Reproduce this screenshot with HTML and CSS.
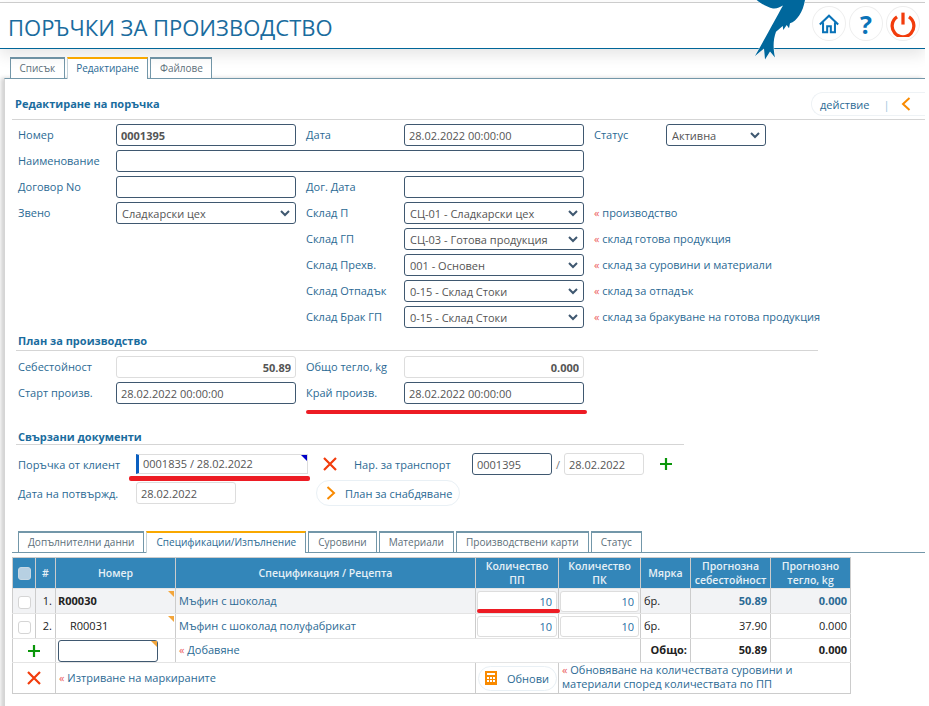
FILE: index.html
```html
<!DOCTYPE html>
<html lang="bg">
	<head>
		<meta charset="UTF-8" />
		<title>Поръчки за производство</title>
		<link rel="stylesheet" href="styles.css">
	</head>
	<body>
		<div class="page">
			<!-- Header -->
			<header class="top">
				<h1>ПОРЪЧКИ ЗА ПРОИЗВОДСТВО</h1>
				<svg class="bird" viewBox="0 0 60 60" width="60" height="60">
					<path d="M6.7 0 C10 3 17 7 23 8.5 C27 9 30 7 33 5.5 C26 18 18 33 5 56 L14 48.5 L15 59.5 L20 51.5 L25 57.5 C23 48 23 40 26 31.7 L32.7 26 L33.3 30 L36.7 25 L39 28.3 L40 23.3 C47 21 53 12 55 0 Z" />
				</svg>
				<nav class="top-icons">
					<a class="round-btn">
						<svg viewBox="0 0 24 24" width="22" height="22" fill="none" stroke="#0a73b8" stroke-width="2.2"><path d="M2 12.5 L12 3 L22 12.5" /><path d="M5.5 10 V21 H10 V14.5 H14 V21 H18.5 V10" /></svg>
					</a>
					<a class="round-btn help">?</a>
					<a class="round-btn">
						<svg viewBox="0 0 24 24" width="26" height="26" fill="none" stroke="#f23c0c" stroke-width="3"><path d="M12 1.5 V12.5" /><path d="M6.5 5.5 A10 10 0 1 0 17.5 5.5" /></svg>
					</a>
				</nav>
			</header>

			<!-- Main tabs -->
			<div class="tabs main-tabs">
				<a class="tab">Списък</a>
				<a class="tab active">Редактиране</a>
				<a class="tab">Файлове</a>
			</div>

			<div class="panel">
				<div class="panel-head">
					<h2>Редактиране на поръчка</h2>
					<div class="action-pill">
						<span>действие</span>
						<i class="pipe">|</i>
						<svg viewBox="0 0 10 14" width="10" height="14" fill="none" stroke="#f98a00" stroke-width="2"><path d="M8.5 1 L2 7 L8.5 13" /></svg>
					</div>
				</div>

				<!-- Order form -->
				<div class="form-grid">
					<label>Номер</label>
					<input class="strong" value="0001395" />
					<label>Дата</label>
					<input value="28.02.2022 00:00:00" />
					<label>Статус</label>
					<select><option>Активна</option></select>

					<label>Наименование</label>
					<input class="span3" value="" />
					<div class="span2"></div>

					<label>Договор No</label>
					<input value="" />
					<label>Дог. Дата</label>
					<input value="" />
					<div class="span2"></div>

					<label>Звено</label>
					<select><option>Сладкарски цех</option></select>
					<label>Склад П</label>
					<select><option>СЦ-01 - Сладкарски цех</option></select>
					<div class="note span2"><b>«</b> производство</div>

					<div class="span2"></div>
					<label>Склад ГП</label>
					<select><option>СЦ-03 - Готова продукция</option></select>
					<div class="note span2"><b>«</b> склад готова продукция</div>

					<div class="span2"></div>
					<label>Склад Прехв.</label>
					<select><option>001 - Основен</option></select>
					<div class="note span2"><b>«</b> склад за суровини и материали</div>

					<div class="span2"></div>
					<label>Склад Отпадък</label>
					<select><option>0-15 - Склад Стоки</option></select>
					<div class="note span2"><b>«</b> склад за отпадък</div>

					<div class="span2"></div>
					<label>Склад Брак ГП</label>
					<select><option>0-15 - Склад Стоки</option></select>
					<div class="note span2"><b>«</b> склад за бракуване на готова продукция</div>
				</div>

				<h3 class="section plan">План за производство</h3>
				<div class="form-grid plan-grid">
					<label>Себестойност</label>
					<input class="readonly strong right" value="50.89" />
					<label>Общо тегло, kg</label>
					<input class="readonly strong right" value="0.000" />
					<div class="span2"></div>

					<label>Старт произв.</label>
					<input value="28.02.2022 00:00:00" />
					<label>Край произв.</label>
					<input value="28.02.2022 00:00:00" />
					<div class="span2"></div>
				</div>

				<h3 class="section linked">Свързани документи</h3>
				<div class="link-row first">
					<label>Поръчка от клиент</label>
					<div class="link-field">0001835 / 28.02.2022</div>
					<svg class="ico-x" viewBox="0 0 14 14" width="14" height="14" fill="none" stroke="#f23c0c" stroke-width="2.2"><path d="M1 1 L13 13 M13 1 L1 13" /></svg>
					<label class="transport-label">Нар. за транспорт</label>
					<input class="transport-no" value="0001395" />
					<span class="slash">/</span>
					<input class="readonly transport-date" value="28.02.2022" />
					<svg class="ico-plus" viewBox="0 0 14 14" width="14" height="14" fill="none" stroke="#0a960a" stroke-width="2.2"><path d="M7 1 V13 M1 7 H13" /></svg>
				</div>
				<div class="link-row">
					<label>Дата на потвържд.</label>
					<input class="readonly confirm-date" value="28.02.2022" />
					<a class="pill-btn supply">
						<svg viewBox="0 0 10 14" width="10" height="14" fill="none" stroke="#f98a00" stroke-width="2"><path d="M1.5 1 L8 7 L1.5 13" /></svg>
						План за снабдяване
					</a>
				</div>

				<!-- Detail tabs -->
				<div class="tabs sub-tabs">
					<a class="tab">Допълнителни данни</a>
					<a class="tab active">Спецификации/Изпълнение</a>
					<a class="tab">Суровини</a>
					<a class="tab">Материали</a>
					<a class="tab">Производствени карти</a>
					<a class="tab">Статус</a>
				</div>

				<table class="spec">
					<colgroup>
						<col class="c-check"><col class="c-num"><col class="c-code"><col class="c-name">
						<col class="c-qty"><col class="c-qty2"><col class="c-unit"><col class="c-sum"><col class="c-sum">
					</colgroup>
					<thead>
						<tr>
							<th><input type="checkbox" class="check head-check" /></th>
							<th>#</th>
							<th>Номер</th>
							<th>Спецификация / Рецепта</th>
							<th>Количество<br>ПП</th>
							<th>Количество<br>ПК</th>
							<th>Мярка</th>
							<th>Прогнозна<br>себестойност</th>
							<th>Прогнозно<br>тегло, kg</th>
						</tr>
					</thead>
					<tbody>
						<tr class="row-main">
							<td class="center"><input type="checkbox" class="check" /></td>
							<td class="right dark">1.</td>
							<td class="code corner"><b>R00030</b></td>
							<td>Мъфин с шоколад</td>
							<td class="qty"><input value="10" /></td>
							<td class="qty"><input value="10" /></td>
							<td class="dark">бр.</td>
							<td class="right"><b>50.89</b></td>
							<td class="right"><b>0.000</b></td>
						</tr>
						<tr>
							<td class="center"><input type="checkbox" class="check" /></td>
							<td class="right dark">2.</td>
							<td class="code sub corner">R00031</td>
							<td>Мъфин с шоколад полуфабрикат</td>
							<td class="qty"><input value="10" /></td>
							<td class="qty"><input value="10" /></td>
							<td class="dark">бр.</td>
							<td class="right dark">37.90</td>
							<td class="right dark">0.000</td>
						</tr>
						<tr class="row-add">
							<td colspan="2" class="center">
								<svg viewBox="0 0 14 14" width="14" height="14" fill="none" stroke="#0a960a" stroke-width="2.2"><path d="M7 1 V13 M1 7 H13" /></svg>
							</td>
							<td class="add-code"><div class="add-input"><input value="" /></div></td>
							<td colspan="3" class="note-cell"><b>«</b> Добавяне</td>
							<td class="right dark"><b>Общо:</b></td>
							<td class="right dark"><b>50.89</b></td>
							<td class="right dark"><b>0.000</b></td>
						</tr>
					</tbody>
					<tfoot>
						<tr>
							<td colspan="2" class="center">
								<svg viewBox="0 0 14 14" width="14" height="14" fill="none" stroke="#f23c0c" stroke-width="2.2"><path d="M1 1 L13 13 M13 1 L1 13" /></svg>
							</td>
							<td colspan="2" class="note-cell"><b>«</b> Изтриване на маркираните</td>
							<td class="refresh-cell">
								<a class="pill-btn refresh">
									<svg viewBox="0 0 12 14" width="12" height="14"><path fill="#f98a00" fill-rule="evenodd" d="M0 0 H12 V14 H0 Z M2 2 V4 H10 V2 Z M2 6 V8 H4 V6 Z M5 6 V8 H7 V6 Z M8 6 V8 H10 V6 Z M2 9 V11 H4 V9 Z M5 9 V11 H7 V9 Z M8 9 V11 H10 V9 Z" /></svg>
									Обнови
								</a>
							</td>
							<td colspan="4" class="note-cell wrap"><b>«</b> Обновяване на количествата суровини и материали според количествата по ПП</td>
						</tr>
					</tfoot>
				</table>
			</div>

			<!-- Red marks drawn over the screenshot -->
			<span class="mark mark-end"></span>
			<span class="mark mark-client"></span>
			<span class="mark mark-qty"></span>
		</div>
	</body>
</html>
```

FILE: styles.css
```css
/* Base styles */
html, body {
	margin: 0;
	padding: 0;
	background: #fff;
}
body {
	font-family: "Open Sans", Arial, sans-serif;
	font-size: 11px;
	color: #2b6a94;
	overflow: hidden;
}
.page {
	position: relative;
	width: 925px;
	height: 706px;
	overflow: hidden;
}
input, select {
	font-family: inherit;
	font-size: 11px;
	color: #555;
	box-sizing: border-box;
	height: 22px;
	margin: 0;
	padding: 0 4px;
	background: #fff;
	border: 1px solid #3f5870;
	border-radius: 3px;
	outline: none;
}
select {
	appearance: none;
	padding-left: 5px;
	background-image: url("data:image/svg+xml,%3Csvg xmlns='http://www.w3.org/2000/svg' width='10' height='7'%3E%3Cpath d='M1 1 L5 5 L9 1' fill='none' stroke='%233f5870' stroke-width='2'/%3E%3C/svg%3E");
	background-repeat: no-repeat;
	background-position: right 5px center;
}
input.readonly {
	border-color: #ddd;
}
input.strong {
	font-weight: 700;
}
input.right {
	text-align: right;
}

/* Header */
.top {
	position: relative;
	margin-top: 2px;
	height: 45px;
	border-top: 1px solid #ccc;
	border-bottom: 1px solid #006699;
	box-shadow: 0 6px 14px rgba(0, 0, 0, 0.1);
	display: flex;
	align-items: center;
	justify-content: space-between;
	padding: 0 5px 0 8px;
}
.top h1 {
	margin: 3px 0 0;
	font-size: 22px;
	font-weight: 400;
	color: #1a6c9e;
}
.bird {
	position: absolute;
	left: 750px;
	top: -3px;
	fill: #00679c;
	stroke: #fff;
	stroke-width: 1;
	paint-order: stroke;
}
.top-icons {
	display: flex;
	gap: 3px;
	margin-bottom: 4px;
}
.round-btn {
	box-sizing: border-box;
	width: 34px;
	height: 35px;
	border: 1px solid #eee;
	border-radius: 50%;
	display: flex;
	align-items: center;
	justify-content: center;
}
.help {
	font-size: 25px;
	font-weight: 700;
	color: #0a73b8;
}

/* Tabs */
.tabs {
	display: flex;
	gap: 2px;
	height: 21px;
}
.main-tabs {
	margin: 8px 0 0 10px;
}
.main-tabs .tab {
	padding: 0 8.5px;
}
.sub-tabs {
	margin: 27px 0 0 7px;
	padding-left: 6px;
	border-bottom: 1px solid #7397a9;
}
.sub-tabs .tab {
	font-size: 10.05px;
}
.tab {
	box-sizing: border-box;
	height: 21px;
	padding: 0 9px;
	font-size: 10px;
	line-height: 18px;
	background: #fff;
	color: #5d6f7a;
	border: 1px solid #7397a9;
	border-top-width: 2px;
	border-bottom: 0;
	white-space: nowrap;
}
.tab.active {
	height: 22px;
	color: #2b6a94;
	border-top-color: #f9a800;
	border-left-color: #c5d3da;
	position: relative;
	z-index: 1;
}

/* Panel */
.panel {
	margin-left: 4px;
	border-top: 1px solid #7397a9;
	border-left: 1px solid #d5d5d5;
	box-shadow: -3px 0 4px rgba(0, 0, 0, 0.18);
	height: 640px;
}
.panel-head {
	margin-left: 7px;
	height: 40px;
	border-bottom: 1px solid #d5d5d5;
	display: flex;
	align-items: flex-end;
	justify-content: space-between;
	padding-left: 3px;
}
.panel-head h2 {
	margin: 0 0 8px;
	font-size: 11px;
	font-weight: 700;
	color: #1a6c9e;
}
.action-pill {
	box-sizing: border-box;
	width: 114px;
	height: 24px;
	margin-bottom: 3px;
	padding-left: 8px;
	display: flex;
	align-items: center;
	border: 1px solid #eef2f5;
	border-right: 0;
	border-radius: 12px 0 0 12px;
}
.pipe {
	margin-left: 14px;
	font-style: normal;
	color: #9cc4dd;
}
.action-pill svg {
	margin-left: 12px;
}

/* Forms */
.form-grid {
	margin: 4px 0 0 13px;
	display: grid;
	grid-template-columns: 88px 180px 88px 180px 62px 100px;
	grid-auto-rows: 22px;
	gap: 4px 10px;
	align-items: center;
}
.form-grid input, .form-grid select {
	width: 100%;
}
.form-grid label, .note {
	white-space: nowrap;
	padding-bottom: 2px;
}
.span2 {
	grid-column: span 2;
}
.form-grid .span3 {
	grid-column: span 3;
}
.note b, .note-cell b {
	font-weight: 400;
	color: #ec5a5a;
}
.plan-grid {
	margin-top: 5px;
}
.section {
	margin: 0 0 0 11px;
	padding-left: 2px;
	font-size: 11px;
	font-weight: 700;
	color: #1a6c9e;
	border-bottom: 1px solid #d5d5d5;
}
.section.plan {
	width: 800px;
	margin-top: 5px;
	padding-bottom: 2px;
}
.section.linked {
	width: 666px;
	margin-top: 25px;
	padding-bottom: 0;
}

/* Linked documents */
.link-row {
	margin: 7px 0 0 13px;
	height: 22px;
	display: flex;
	align-items: center;
}
.link-row.first {
	margin-top: 8px;
}
.link-row > label {
	width: 118px;
	flex: none;
}
.link-field {
	position: relative;
	box-sizing: border-box;
	width: 172px;
	height: 20px;
	line-height: 18px;
	padding-left: 4px;
	color: #555;
	border: 1px solid #ddd;
	border-left: 3px solid #0a5fc0;
}
.link-field::after {
	content: "";
	position: absolute;
	top: 0;
	right: 0;
	border-top: 6px solid #0000c8;
	border-left: 6px solid transparent;
}
.ico-x {
	margin-left: 15px;
}
.link-row > .transport-label {
	margin-left: 17px;
	width: 118px;
}
.transport-no, .transport-date {
	width: 80px;
}
.slash {
	width: 12px;
	text-align: center;
	color: #777;
}
.ico-plus {
	margin-left: 15px;
}
.confirm-date {
	width: 100px;
}
.pill-btn {
	box-sizing: border-box;
	display: inline-flex;
	align-items: center;
	height: 26px;
	border: 1px solid #e9f0f5;
	border-radius: 13px;
	white-space: nowrap;
}
.supply {
	margin-left: 80px;
	width: 144px;
	padding-left: 9px;
	gap: 9px;
}

/* Spec table */
.spec {
	margin: 4px 0 0 7px;
	width: 839px;
	table-layout: fixed;
	border-collapse: collapse;
	border: 1px solid #ccc;
}
.c-check { width: 23px; }
.c-num { width: 20px; }
.c-code { width: 120px; }
.c-name { width: 300px; }
.c-qty { width: 83px; }
.c-qty2 { width: 82px; }
.c-unit { width: 50px; }
.c-sum { width: 80px; }
.spec th {
	height: 30px;
	padding: 0;
	background: #3386b9;
	color: #e6f0f6;
	font-size: 10.5px;
	font-weight: 600;
	line-height: 14px;
	border: 1px solid #ccc;
	border-top: 0;
	border-bottom: 0;
}
.spec td {
	box-sizing: border-box;
	height: 25px;
	padding: 0 3px 2px;
	border: 1px solid #e4e4e4;
	border-left: 1px solid #ccc;
	border-right: 1px solid #ccc;
	white-space: nowrap;
}
.row-add td {
	height: 24px;
}
.row-main td {
	background: #f2f3f5;
}
.center {
	text-align: center;
}
.spec td.center {
	padding: 0;
}
.right {
	text-align: right;
}
.dark {
	color: #222;
}
.code {
	color: #222;
	position: relative;
}
.spec td.code {
	padding-left: 2px;
}
.spec td.sub {
	padding-left: 14px;
}
.corner::after, .add-input::after {
	content: "";
	position: absolute;
	top: 2px;
	right: 1px;
	border-top: 6px solid #f3a63c;
	border-left: 6px solid transparent;
}
.add-input::after {
	top: 1px;
}
.check {
	appearance: none;
	width: 13px;
	height: 13px;
	padding: 0;
	margin: 0;
	vertical-align: middle;
	border: 1px solid #d5d5d5;
	border-radius: 3px;
	background: #fff;
}
.head-check {
	background: #b7d0e2;
	border-color: #c7d8e4;
}
.spec td.qty {
	padding: 1px;
}
.qty input {
	display: block;
	width: 100%;
	height: 21px;
	border-color: #ddd;
	text-align: right;
	color: #1f6fa5;
}
.spec td svg {
	display: block;
	margin: 0 auto;
}
.spec .pill-btn svg {
	margin: 0;
}
.spec td.add-code {
	padding: 0 2px;
}
.add-input {
	position: relative;
	width: 100px;
}
.add-input input {
	width: 100%;
	display: block;
}
.spec tfoot td {
	height: 30px;
	border-top: 1px solid #006699;
	border-bottom: 1px solid #ccc;
}
.spec td.refresh-cell {
	padding: 0 2px;
}
.refresh {
	display: flex;
	width: 79px;
	height: 25px;
	padding-left: 6px;
	gap: 10px;
}
.spec td.wrap {
	white-space: normal;
	line-height: 14px;
}

/* Red hand-drawn marks */
.mark {
	position: absolute;
	background: #ed1c24;
	border-radius: 2px;
}
.mark-end {
	left: 306px;
	top: 410px;
	width: 281px;
	height: 4px;
}
.mark-client {
	left: 129px;
	top: 476px;
	width: 181px;
	height: 5px;
}
.mark-qty {
	left: 477px;
	top: 609px;
	width: 83px;
	height: 4px;
}
```
